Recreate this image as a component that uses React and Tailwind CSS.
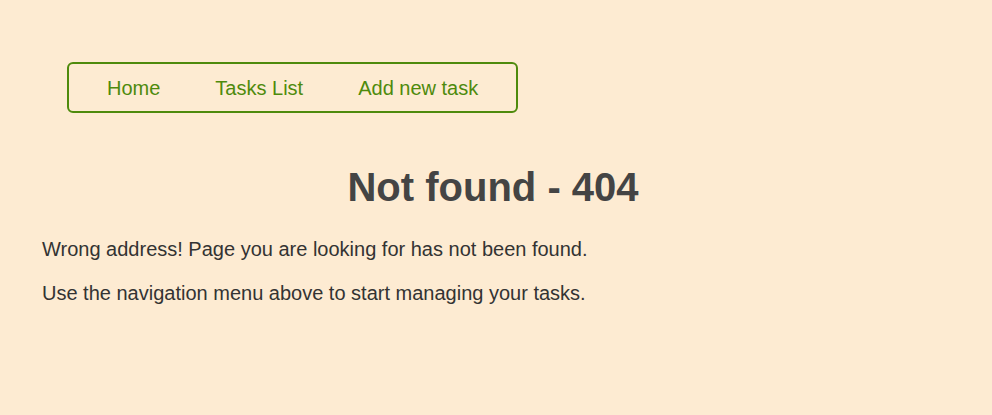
export default function App() {
  const links = ["Home", "Tasks List", "Add new task"];

  return (
    <div
      className="min-h-screen bg-[#fdebd2] pt-[62px] pl-[42px] pr-[48px] text-[#333]"
      style={{ fontFamily: '"Liberation Sans", Arial, sans-serif' }}
    >
      <nav className="ml-[25px] inline-flex h-[51px] items-center rounded-[6px] border-2 border-[#4e8a0c] px-[10.5px] pt-[2px]">
        {links.map((label) => (
          <a
            key={label}
            href="#"
            className="px-[27.5px] text-[20px] leading-[normal] text-[#4e8a0c]"
          >
            {label}
          </a>
        ))}
      </nav>

      <h1 className="mt-[51px] text-center text-[40px] font-bold leading-[46px] text-[#444]">
        Not found - 404
      </h1>
      <p className="mt-[28px] text-[20px] leading-[normal]">
        Wrong address! Page you are looking for has not been found.
      </p>
      <p className="mt-[21px] text-[20px] leading-[normal]">
        Use the navigation menu above to start managing your tasks.
      </p>
    </div>
  );
}
